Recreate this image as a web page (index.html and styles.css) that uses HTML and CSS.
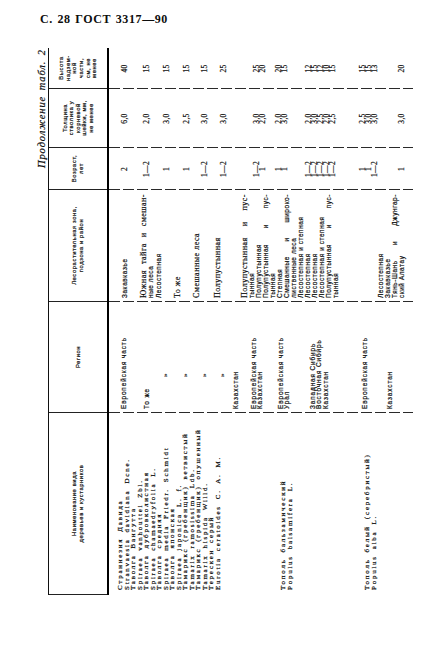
FILE: index.html
```html
<!DOCTYPE html>
<html lang="ru">
<head>
<meta charset="utf-8">
<title>ГОСТ 3317—90</title>
<link rel="stylesheet" href="styles.css">
</head>
<body>
<div class="page">
  <div class="runhead">С. 28 ГОСТ 3317—90</div>
  <div class="rot-box">
    <div class="sheet">
      <div class="caption">Продолжение табл. 2</div>
      <div class="tbl">
        <div class="thead">
          <div class="th">Наименование вида<br>деревьев и кустарников</div>
          <div class="th">Регион</div>
          <div class="th">Лесорастительная зона,<br>подзона и район</div>
          <div class="th">Возраст,<br>лет</div>
          <div class="th">Толщина<br>стволика у<br>корневой<br>шейки, мм,<br>не менее</div>
          <div class="th">Высота<br>надзем-<br>ной<br>части,<br>см, не<br>менее</div>
        </div>
        <div class="tbody">
          <div class="col names">
            <div class="grp">
              <div>Страннезия Давида</div>
              <div>Stranvaesia davidiana Dcne.</div>
              <div>Таволга Вангутта</div>
              <div>Spiraea vanhouttei Zbl.</div>
              <div>Таволга дубровколистная</div>
              <div>Spiraea chamaedryfolia L.</div>
              <div>Таволга средняя</div>
              <div>Spiraea media Friedr. Schmidt</div>
              <div>Таволга японская</div>
              <div>Spiraea japonica L. f.</div>
              <div>Тамарикс (гребенщик) ветвистый</div>
              <div>Tamarix ramosissima Ldb.</div>
              <div>Тамарикс (гребенщик) опушенный</div>
              <div>Tamarix hispida Willd.</div>
              <div>Терескен серый</div>
              <div>Eurotia ceratoides C. A. M.</div>
            </div>
            <div class="grp">
              <div>Тополь бальзамический</div>
              <div>Populus balsamifera L.</div>
            </div>
            <div class="grp">
              <div>Тополь белый (серебристый)</div>
              <div>Populus alba L.</div>
            </div>
          </div>
          <div class="col region">
            <div class="grp">Европейская часть</div>
            <div class="grp">То же</div>
            <div class="grp ditto">»</div>
            <div class="grp ditto">»</div>
            <div class="grp ditto">»</div>
            <div class="grp ditto">»</div>
            <div class="grp">Казахстан</div>
            <div class="grp"><div>Европейская часть</div><div>Казахстан</div></div>
            <div class="grp"><div>Европейская часть</div><div>Урал</div></div>
            <div class="grp"><div>Западная Сибирь</div><div>Восточная Сибирь</div><div>Казахстан</div></div>
            <div class="grp">Европейская часть</div>
            <div class="grp">Казахстан</div>
          </div>
          <div class="col zone">
            <div class="grp">Закавказье</div>
            <div class="grp"><div class="j big">Южная тайга и смешан-</div><div>ные леса</div></div>
            <div class="grp">Лесостепная</div>
            <div class="grp big">То же</div>
            <div class="grp big">Смешанные леса</div>
            <div class="grp big">Полупустынная</div>
            <div class="grp">
              <div class="j big">Полупустынная и пус-</div>
              <div>тынная</div>
              <div>Полупустынная</div>
              <div class="j">Полупустынная и пус-</div>
              <div>тынная</div>
              <div>Степная</div>
              <div class="j">Смешанные и широко-</div>
              <div>лиственные леса</div>
              <div>Лесостепная и степная</div>
              <div>Лесостепная</div>
              <div>Лесостепная</div>
              <div>Лесостепная и степная</div>
              <div class="j">Полупустынная и пус-</div>
              <div>тынная</div>
            </div>
            <div class="grp">
              <div>Лесостепная</div>
              <div>Закавказье</div>
              <div class="j">Тянь-Шань и Джунгар-</div>
              <div>ский Алатау</div>
            </div>
          </div>
          <div class="col val">
            <div class="grp">2</div>
            <div class="grp">1—2</div>
            <div class="grp">1</div>
            <div class="grp">1</div>
            <div class="grp">1—2</div>
            <div class="grp">1—2</div>
            <div class="grp"><div>1—2</div><div>1</div></div>
            <div class="grp"><div>1</div><div>1</div></div>
            <div class="grp"><div>1—2</div><div>1—2</div><div>1—2</div><div>1—2</div><div>1—2</div></div>
            <div class="grp"><div>1</div><div>1</div><div>1—2</div></div>
            <div class="grp">1</div>
          </div>
          <div class="col val">
            <div class="grp">6,0</div>
            <div class="grp">2,0</div>
            <div class="grp">3,0</div>
            <div class="grp">2,5</div>
            <div class="grp">3,0</div>
            <div class="grp">3,0</div>
            <div class="grp"><div>3,0</div><div>2,0</div></div>
            <div class="grp"><div>2,0</div><div>3,0</div></div>
            <div class="grp"><div>2,0</div><div>3,0</div><div>2,5</div><div>2,0</div><div>2,5</div></div>
            <div class="grp"><div>2,5</div><div>3,0</div><div>3,0</div></div>
            <div class="grp">3,0</div>
          </div>
          <div class="col val">
            <div class="grp">40</div>
            <div class="grp">15</div>
            <div class="grp">15</div>
            <div class="grp">15</div>
            <div class="grp">15</div>
            <div class="grp">25</div>
            <div class="grp"><div>25</div><div>20</div></div>
            <div class="grp"><div>20</div><div>15</div></div>
            <div class="grp"><div>12</div><div>15</div><div>12</div><div>10</div><div>15</div></div>
            <div class="grp"><div>15</div><div>15</div><div>13</div></div>
            <div class="grp">20</div>
          </div>
        </div>
      </div>
    </div>
  </div>
</div>
</body>
</html>
```

FILE: styles.css
```css
* { box-sizing: border-box; margin: 0; padding: 0; }
html, body { background: #fff; }
body { margin: 0; color: #0d0d0d; }

.page { width: 427px; height: 653px; padding-top: 12px; overflow: hidden; }

.runhead {
  margin-left: 40px;
  font: bold 12px/14px "Liberation Serif", serif;
  letter-spacing: 0.6px;
  word-spacing: 1px;
}

/* the table is printed sideways: a box in flow, the sheet turned inside it */
.rot-box { margin: 22px 0 0 35px; width: 385px; height: 547px; }
.sheet {
  width: 547px; height: 385px;
  transform-origin: 0 0;
  transform: translateY(547px) rotate(-90deg);
  -webkit-text-stroke: 0.2px #0d0d0d;
}

.caption {
  height: 13px;
  font: italic 10.5px/13px "Liberation Serif", serif;
  letter-spacing: 0.9px;
  word-spacing: 2px;
  text-align: right;
  padding-right: 1px;
}

.tbl { border-top: 1px solid #111; }

.thead, .tbody {
  display: grid;
  grid-template-columns: 182px 111px 112px 42px 59px 41px;
}

.thead { height: 60px; border-bottom: 2px solid #000; }
.th {
  display: flex; align-items: center; justify-content: center;
  text-align: center;
  border-left: 1px solid #222;
  font: 5.8px/6.6px "Liberation Sans", sans-serif;
  letter-spacing: 0.6px;
}

.tbody { height: 304px; }
.col { display: flex; flex-direction: column; white-space: nowrap; }
.col + .col {
  background: repeating-linear-gradient(to bottom, #2a2a2a 0 11px, transparent 11px 14px) left top / 1px 100% no-repeat;
}

/* names */
.names {
  padding-left: 5px;
  font: 7px/6.5px "Liberation Serif", serif;
  letter-spacing: 1.75px;
  word-spacing: 2.5px;
}
.names .grp:nth-child(1) { margin-top: 8px; }
.names .grp:nth-child(2) { margin-top: 59px; }
.names .grp:nth-child(3) { margin-top: 71px; }

/* region */
.region {
  padding-left: 4px;
  font: 6.4px/6.5px "Liberation Sans", sans-serif;
  letter-spacing: 0.9px;
}
.region .ditto { padding-left: 32px; font-family: "Liberation Serif", serif; font-size: 7px; }
.region .grp:nth-child(1) { margin-top: 12px; }
.region .grp:nth-child(2) { margin-top: 16px; }
.region .grp:nth-child(3) { margin-top: 12px; }
.region .grp:nth-child(4) { margin-top: 13px; }
.region .grp:nth-child(5) { margin-top: 13px; }
.region .grp:nth-child(6) { margin-top: 11px; }
.region .grp:nth-child(7) { margin-top: 8px; }
.region .grp:nth-child(8) { margin-top: 11px; }
.region .grp:nth-child(9) { margin-top: 14px; }
.region .grp:nth-child(10) { margin-top: 19px; }
.region .grp:nth-child(11) { margin-top: 33px; }
.region .grp:nth-child(12) { margin-top: 18px; }

/* zone */
.zone {
  padding: 0 4px 0 4px;
  font: 6.4px/7px "Liberation Sans", sans-serif;
  letter-spacing: 0.6px;
}
.zone .big { font-family: "Liberation Serif", serif; font-size: 8px; letter-spacing: 0.5px; }
.zone .j { text-align: justify; text-align-last: justify; }
.zone .grp:nth-child(1) { margin-top: 12px; }
.zone .grp:nth-child(2) { margin-top: 12px; }
.zone .grp:nth-child(3) { margin-top: 1px; }
.zone .grp:nth-child(4) { margin-top: 12px; }
.zone .grp:nth-child(5) { margin-top: 12px; }
.zone .grp:nth-child(6) { margin-top: 14px; }
.zone .grp:nth-child(7) { margin-top: 20px; }
.zone .grp:nth-child(8) { margin-top: 38px; }

/* numbers */
.val {
  text-align: center;
  font: 7.5px/6px "Liberation Serif", serif;
  letter-spacing: 0.3px;
}
.val .grp:nth-child(1) { margin-top: 13px; }
.val .grp:nth-child(2) { margin-top: 16px; }
.val .grp:nth-child(3) { margin-top: 14px; }
.val .grp:nth-child(4) { margin-top: 14px; }
.val .grp:nth-child(5) { margin-top: 12px; }
.val .grp:nth-child(6) { margin-top: 13px; }
.val .grp:nth-child(7) { margin-top: 27px; }
.val .grp:nth-child(8) { margin-top: 10px; }
.val .grp:nth-child(9) { margin-top: 18px; }
.val .grp:nth-child(10) { margin-top: 24px; }
.val .grp:nth-child(11) { margin-top: 21px; }
```
